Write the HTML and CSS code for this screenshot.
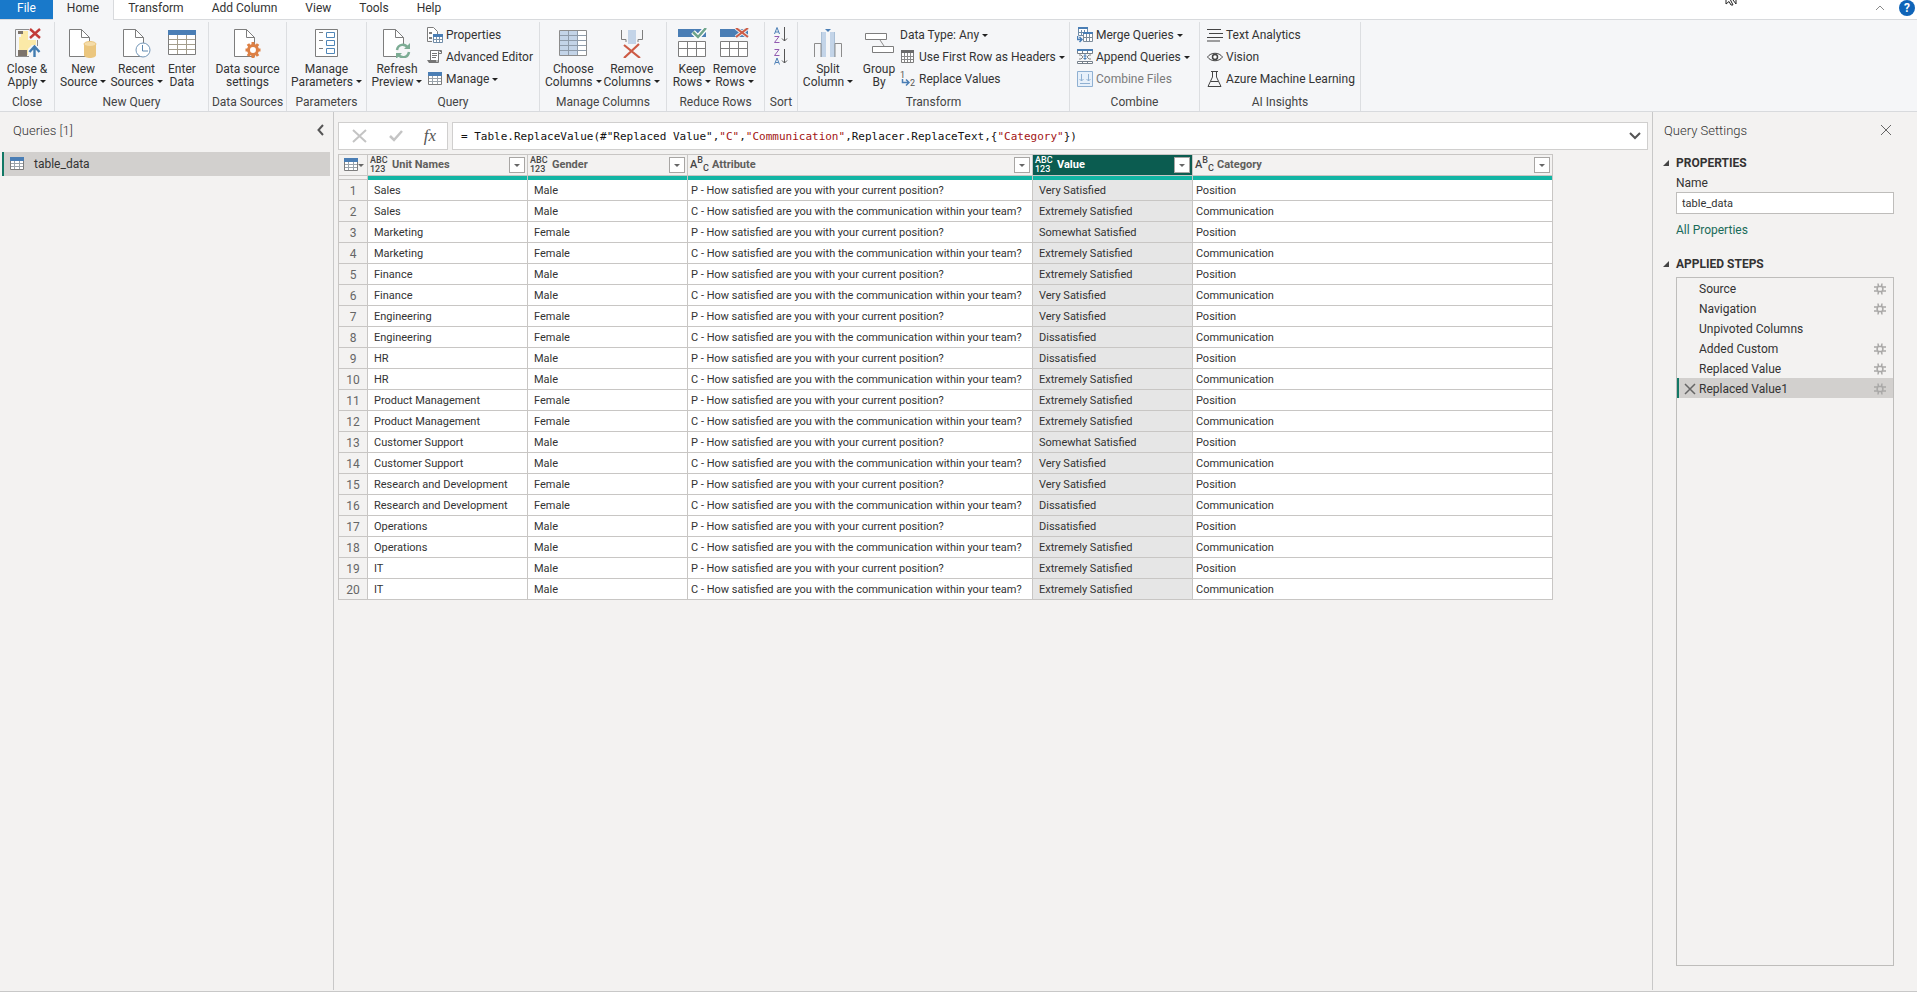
FILE: index.html
```
<!DOCTYPE html>
<html lang="en">
<head>
  <meta charset="UTF-8" />
  <meta name="viewport" content="width=device-width, initial-scale=1.0" />
  <title>Power Query Editor</title>
  <link rel="stylesheet" href="styles.css">
</head>
<body>
  <!-- shared shapes -->
  <svg class="defs" width="0" height="0" aria-hidden="true">
    <symbol id="page" viewBox="0 0 30 30">
      <path d="M1.5 1.5H13.5L21.5 9.5V28.5H1.5Z" fill="#fff" stroke="#7d7d7d"/>
      <path d="M13.5 1.5V9.5H21.5" fill="none" stroke="#7d7d7d"/>
    </symbol>
    <symbol id="table" viewBox="0 0 14 14">
      <path d="M.5 .5H13.5V12.5H.5Z" fill="#fff" stroke="#7d7d7d"/>
      <path d="M0 0H14V4H0Z" fill="#4a7eb5"/>
      <path d="M4.5 4V12M9.5 4V12M1 6.5H13M1 9.5H13" stroke="#9aa3ab"/>
    </symbol>
    <symbol id="gear" viewBox="0 0 12 12">
      <path d="M4 .5L4.500 3.500M8 .5L7.500 3.500M4 11.500L4.500 8.500M8 11.500L7.500 8.500M0 4H3.500M0 8H3.500M8.500 4H12M8.500 8H12" stroke="#a9a8a7" stroke-width="1.500"/>
      <path d="M4 3.500H8L9 6L8 8.500H4L3 6Z" fill="none" stroke="#a9a8a7" stroke-width="1.500"/>
    </symbol>
  </svg>

  <nav class="tabs">
    <button class="tab tab-file">File</button>
    <button class="tab tab-active">Home</button>
    <button class="tab">Transform</button>
    <button class="tab">Add Column</button>
    <button class="tab">View</button>
    <button class="tab">Tools</button>
    <button class="tab">Help</button>
    <div class="tabs-right">
      <button class="plain" aria-label="Collapse ribbon"><svg width="10" height="6"><path d="M1 5L5 1L9 5" fill="none" stroke="#8a8a8a"/></svg></button>
      <button class="help" aria-label="Help">?</button>
    </div>
    <svg class="cursor" width="14" height="6"><path d="M1 0V4L4 1.5L6 5H8L5.500 0M8 0L11 4V0" fill="#fff" stroke="#222"/></svg>
  </nav>

  <div class="ribbon">
    <section class="group g-close">
      <div class="tools">
        <button class="tool">
          <svg width="30" height="30"><path d="M3.500 1.500H17M3.500 1.500V28.500H17M25.500 12V18" fill="none" stroke="#8c8c8c"/><path d="M9 3H16V27H7V9H9ZM16 12H24V17H20L16 21Z" fill="#fbe9a7"/><path d="M6 3H11V6H6ZM6 22H15V28H6Z" fill="#7c736b"/><path d="M18 1L28 10M28 1L18 10" stroke="#c23b38" stroke-width="2.400"/><path d="M22.500 29V19M17.500 24L22.500 18.500L27.500 24" fill="none" stroke="#427cb0" stroke-width="2.400"/></svg>
          <span>Close &amp;<br>Apply <i class="caret"></i></span>
        </button>
      </div>
      <div class="group-name">Close</div>
    </section>
    <section class="group g-new">
      <div class="tools">
        <button class="tool">
          <svg width="30" height="30"><use href="#page" width="30" height="30"/><path d="M16 16V27C16 31 28 31 28 27V16Z" fill="#ebc67e"/><ellipse cx="22" cy="16" rx="6" ry="2.500" fill="#f5dca8" stroke="#ebc67e"/></svg>
          <span>New<br>Source <i class="caret"></i></span>
        </button>
        <button class="tool">
          <svg width="30" height="30"><use href="#page" width="30" height="30"/><circle cx="21" cy="22" r="7" fill="#fff" stroke="#7497b8"/><path d="M20.500 17V23H26" fill="none" stroke="#5f89b0"/></svg>
          <span>Recent<br>Sources <i class="caret"></i></span>
        </button>
        <button class="tool">
          <svg width="30" height="30"><path d="M1.500 2.500H28.500V26.500H1.500Z" fill="#fff" stroke="#7d7d7d"/><path d="M1 2H29V7H1Z" fill="#4a7eb5"/><path d="M10.500 7V26M19.500 7V26M2 11.500H28M2 16.500H28M2 21.500H28" stroke="#a39d8c"/></svg>
          <span>Enter<br>Data</span>
        </button>
      </div>
      <div class="group-name">New Query</div>
    </section>
    <section class="group g-source">
      <div class="tools">
        <button class="tool">
          <svg width="30" height="30"><use href="#page" width="30" height="30"/><circle cx="20" cy="22" r="4.500" fill="#fff" stroke="#dd8045" stroke-width="3"/><path d="M20 14V18M20 26V30M12.500 22H16M24 22H27.500M15 16L17 19M25 16L23 19M15 28L17 25M25 28L23 25" stroke="#dd8045" stroke-width="3"/></svg>
          <span>Data source<br>settings</span>
        </button>
      </div>
      <div class="group-name">Data Sources</div>
    </section>
    <section class="group g-params">
      <div class="tools">
        <button class="tool">
          <svg width="30" height="30"><path d="M3.500 1.500H25.500V28.500H3.500Z" fill="#fff" stroke="#7d7d7d"/><path d="M7 4.500H11M7 12.500H11M7 20.500H11" stroke="#7d7d7d"/><path d="M14.500 4.500H22.500V9.500H14.500ZM14.500 12.500H22.500V17.500H14.500ZM14.500 20.500H22.500V25.500H14.500Z" fill="#fff" stroke="#4f86b8"/></svg>
          <span>Manage<br>Parameters <i class="caret"></i></span>
        </button>
      </div>
      <div class="group-name">Parameters</div>
    </section>
    <section class="group g-query">
      <div class="tools">
        <button class="tool">
          <svg width="30" height="30"><use href="#page" width="30" height="30"/><circle cx="21" cy="23" r="7" fill="#f5f6f8"/><path d="M15 22C16 16 23 15 26 20M27 24C26 30 19 31 16 26" fill="none" stroke="#7cac94" stroke-width="2.500"/><path d="M28 15V21H22ZM14 31V25H20Z" fill="#7cac94"/></svg>
          <span>Refresh<br>Preview <i class="caret"></i></span>
        </button>
        <div class="stack">
          <button class="mini"><svg width="16" height="16"><path d="M.5 14.500V.5H6.500L10.500 4.500V7M.5 14.500H5" fill="#fff" stroke="#7d7d7d"/><path d="M2 5H5V7H2ZM2 10H5V12H2Z" fill="#7d7d7d"/><path d="M6.500 7.500H15.500V15.500H6.500Z" fill="#fff" stroke="#6f8ca8"/><path d="M6 7H16V10H6Z" fill="#4a7eb5"/><path d="M9.500 10V15M12.500 10V15M7 12.500H15" stroke="#7d95ad"/></svg>Properties</button>
          <button class="mini"><svg width="16" height="16"><path d="M3.500 11V1.500H13.500V3M11.500 3V13.500H2" fill="none" stroke="#757575"/><path d="M3.500 1.500H12.500L11.500 3V12H3.500Z" fill="#fff" stroke="#757575"/><path d="M12 1.500H14.500V4.500H12M5 4.500H10M5 6.500H10M5 8.500H9" fill="none" stroke="#757575"/><path d="M0 11H9V14H2Z" fill="#757575"/></svg>Advanced Editor</button>
          <button class="mini"><svg width="16" height="14"><use href="#table" x="1" width="14" height="14"/></svg>Manage <i class="caret"></i></button>
        </div>
      </div>
      <div class="group-name">Query</div>
    </section>
    <section class="group g-columns">
      <div class="tools">
        <button class="tool">
          <svg width="30" height="30"><path d="M1.500 2.500H28.500V27.500H1.500Z" fill="#fff" stroke="#8c8c8c"/><path d="M2 3H20V27H2Z" fill="#c3d4e8"/><path d="M10.500 3V27M19.500 3V27M2 7.500H28M2 12.500H28M2 17.500H28M2 22.500H28" stroke="#8e9baa"/></svg>
          <span>Choose<br>Columns <i class="caret"></i></span>
        </button>
        <button class="tool">
          <svg width="30" height="30"><path d="M4.500 2V11.500H9V14M25.500 2V11.500H21V14" fill="none" stroke="#7d7d7d"/><path d="M11 2H19V16H11Z" fill="#c3d4e8"/><path d="M7 17L23 30M22 16L7 30" stroke="#cd5b45" stroke-width="2.200"/></svg>
          <span>Remove<br>Columns <i class="caret"></i></span>
        </button>
      </div>
      <div class="group-name">Manage Columns</div>
    </section>
    <section class="group g-rows">
      <div class="tools">
        <button class="tool">
          <svg width="30" height="30"><path d="M1 1H29V9H1Z" fill="#4a7eb5"/><path d="M1.500 13.500H28.500V28.500H1.500ZM10.500 13V28M19.500 13V28M1 20.500H29" fill="#fff" stroke="#7d7d7d"/><path d="M16 4L21 9L29 0" fill="none" stroke="#fff" stroke-width="5"/><path d="M16 4L21 9L29 0" fill="none" stroke="#6fa58c" stroke-width="2.500"/></svg>
          <span>Keep<br>Rows <i class="caret"></i></span>
        </button>
        <button class="tool">
          <svg width="30" height="30"><path d="M1 1H29V9H1Z" fill="#4a7eb5"/><path d="M1.500 13.500H28.500V28.500H1.500ZM10.500 13V28M19.500 13V28M1 20.500H29" fill="#fff" stroke="#7d7d7d"/><path d="M17 0L29 9M29 0L17 9" stroke="#e5e9ee" stroke-width="4"/><path d="M17 0L29 9M29 0L17 9" stroke="#cd5b45" stroke-width="2"/></svg>
          <span>Remove<br>Rows <i class="caret"></i></span>
        </button>
      </div>
      <div class="group-name">Reduce Rows</div>
    </section>
    <section class="group g-sort">
      <div class="tools">
        <div class="stack sort-stack">
          <button class="mini sort" aria-label="Sort ascending"><svg width="14" height="16"><path d="M.5 7L3 .5L5.500 7M1.500 5H4.500" fill="none" stroke="#4a7eb5"/><path d="M.5 9.500H5L.5 15.500H5.500" fill="none" stroke="#925bb0"/><path d="M10.500 0V14M8 11.500L10.500 14L13 11.500" fill="none" stroke="#555"/></svg></button>
          <button class="mini sort" aria-label="Sort descending"><svg width="14" height="16"><path d="M.5 .5H5L.5 6.500H5.500" fill="none" stroke="#925bb0"/><path d="M.5 15.500L3 9L5.500 15.500M1.500 13.500H4.500" fill="none" stroke="#4a7eb5"/><path d="M10.500 0V14M8 11.500L10.500 14L13 11.500" fill="none" stroke="#555"/></svg></button>
        </div>
      </div>
      <div class="group-name">Sort</div>
    </section>
    <section class="group g-transform">
      <div class="tools">
        <button class="tool">
          <svg width="30" height="30"><path d="M9 4H13V29H9ZM17 4H21V29H17Z" fill="#c3d4e8"/><path d="M8.500 29V4M21.500 29V4" stroke="#a9bfd6"/><path d="M1.500 29V15.500H8V29M28.500 29V15.500H22V29" fill="none" stroke="#8c8c8c"/><path d="M12 1H18L15 4Z" fill="#4a7eb5"/></svg>
          <span>Split<br>Column <i class="caret"></i></span>
        </button>
        <button class="tool">
          <svg width="30" height="30"><path d="M16 12L20 18" stroke="#8c8c8c"/><path d="M1.500 5.500H22.500V11.500H1.500ZM8.500 18.500H29.500V24.500H8.500Z" fill="#fff" stroke="#7d7d7d"/></svg>
          <span>Group<br>By</span>
        </button>
        <div class="stack">
          <button class="mini">Data Type: Any <i class="caret"></i></button>
          <button class="mini"><svg width="16" height="14"><path d="M1.500 .5H13.500V12.500H1.500Z" fill="#fff" stroke="#7d7d7d"/><path d="M1 0H14V3H1Z" fill="#6b6b6b"/><path d="M4.500 3V12M7.500 3V12M10.500 3V12M2 6.500H13M2 9.500H13" stroke="#8a8a8a"/></svg>Use First Row as Headers <i class="caret"></i></button>
          <button class="mini"><svg width="16" height="16"><text x="0" y="7" class="svg-num">1</text><text x="10" y="15" class="svg-num">2</text><path d="M2.500 8V11.500H8M6 8.500L9 11.500L6 14.500" fill="none" stroke="#4a7eb5" stroke-width="1.500"/></svg>Replace Values</button>
        </div>
      </div>
      <div class="group-name">Transform</div>
    </section>
    <section class="group g-combine">
      <div class="tools">
        <div class="stack">
          <button class="mini"><svg width="16" height="16"><path d="M1.500 .5H10.500V8.500H1.500ZM4.500 3V8M7.500 3V8M1 5.500H10" fill="#fff" stroke="#6f8ca8"/><path d="M1 0H11V2H1Z" fill="#4a7eb5"/><path d="M6.500 6.500H15.500V14.500H6.500ZM9.500 7V14M12.500 7V14M6 10.500H15" fill="#fff" stroke="#7d8c9a"/><path d="M6 5H16V7H6Z" fill="#4a7eb5"/><path d="M.5 9V12.500H4M2.500 10L5 12.500L2.500 15" fill="none" stroke="#4a7eb5" stroke-width="1.500"/></svg>Merge Queries <i class="caret"></i></button>
          <button class="mini"><svg width="16" height="16"><path d="M.5 1.500H15.500V4.500H.5ZM.5 12.500H15.500V14.500H.5ZM5.500 1V4M10.500 1V4M5.500 12V15M10.500 12V15" fill="#fff" stroke="#757f8a"/><path d="M0 0H16V2H0Z" fill="#4a7eb5"/><path d="M2 6H4L6 8L4 10H2M14 6H12L10 8L12 10H14" fill="none" stroke="#858585"/><path d="M8 5V11M6.500 7H9.500M6.500 9.500H9.500" stroke="#4a7eb5"/></svg>Append Queries <i class="caret"></i></button>
          <button class="mini off" disabled><svg width="16" height="16"><path d="M.5 .5H15.500V15.500H.5Z" fill="#e7f0fa" stroke="#8fb0d2"/><path d="M4.500 3V10M2.500 8L4.500 10L6.500 8M11.500 3V10M9.500 8L11.500 10L13.500 8M3 12.500H13" fill="none" stroke="#8fb0d2"/></svg>Combine Files</button>
        </div>
      </div>
      <div class="group-name">Combine</div>
    </section>
    <section class="group g-ai">
      <div class="tools">
        <div class="stack">
          <button class="mini"><svg width="16" height="14"><path d="M0 1.500H14M2 5.500H16M0 9.500H16M0 13H13" stroke="#444"/></svg>Text Analytics</button>
          <button class="mini"><svg width="16" height="12"><path d="M.5 6C4 1 12 1 15.500 6C12 11 4 11 .5 6Z" fill="none" stroke="#444"/><circle cx="8" cy="6" r="2.500" fill="#fff" stroke="#444" stroke-width="1.500"/></svg>Vision</button>
          <button class="mini"><svg width="16" height="16"><path d="M4 .5H11M5.500 .5V6L1 15.500H14L9.500 6V.5M4 10.500H11" fill="none" stroke="#444"/></svg>Azure Machine Learning</button>
        </div>
      </div>
      <div class="group-name">AI Insights</div>
    </section>
  </div>

  <div class="workspace">
    <aside class="queries">
      <div class="panel-head">
        <h2>Queries [1]</h2>
        <button class="plain" aria-label="Collapse queries"><svg width="7" height="12"><path d="M6 1L1.500 6L6 11" fill="none" stroke="#555" stroke-width="2"/></svg></button>
      </div>
      <button class="query"><svg width="14" height="14"><use href="#table" width="14" height="14"/></svg>table_data</button>
    </aside>

    <main class="editor">
      <div class="formula-row">
        <div class="formula-tools">
          <button class="plain" aria-label="Cancel"><svg width="16" height="14"><path d="M1 1L14 13M14 1L1 13" stroke="#c4c4c4" stroke-width="2"/></svg></button>
          <button class="plain" aria-label="Commit"><svg width="14" height="14"><path d="M1 7L5 11L13 2" fill="none" stroke="#c4c4c4" stroke-width="2.500"/></svg></button>
          <button class="plain fx" aria-label="Insert step">fx</button>
        </div>
        <div class="formula-box">
          <div class="formula" role="textbox" contenteditable="true" spellcheck="false" aria-label="Formula">= Table.ReplaceValue(#"Replaced Value",<span class="str">"C"</span>,<span class="str">"Communication"</span>,Replacer.ReplaceText,{<span class="str">"Category"</span>})</div>
          <button class="plain" aria-label="Expand formula bar"><svg width="12" height="8"><path d="M1 1L6 6L11 1" fill="none" stroke="#555" stroke-width="2"/></svg></button>
        </div>
      </div>

      <table class="grid">
        <colgroup>
          <col class="c-num"><col class="c-std"><col class="c-std"><col class="c-attr"><col class="c-std"><col class="c-cat">
        </colgroup>
        <thead>
          <tr>
            <th><button class="corner" aria-label="Table menu"><svg width="14" height="14"><use href="#table" width="14" height="14"/></svg><i class="caret small"></i></button></th>
            <th><div class="head"><span class="any">ABC<br>123</span>Unit Names<button class="filter" aria-label="Filter Unit Names"></button></div></th>
            <th><div class="head"><span class="any">ABC<br>123</span>Gender<button class="filter" aria-label="Filter Gender"></button></div></th>
            <th><div class="head"><span class="abc">A<sup>B</sup><sub>C</sub></span>Attribute<button class="filter" aria-label="Filter Attribute"></button></div></th>
            <th class="picked"><div class="head"><span class="any">ABC<br>123</span>Value<button class="filter" aria-label="Filter Value"></button></div></th>
            <th><div class="head"><span class="abc">A<sup>B</sup><sub>C</sub></span>Category<button class="filter" aria-label="Filter Category"></button></div></th>
          </tr>
          <tr class="quality"><td></td><td></td><td></td><td></td><td></td><td></td></tr>
        </thead>
        <tbody>
          <tr><td>1</td><td>Sales</td><td>Male</td><td>P - How satisfied are you with your current position?</td><td>Very Satisfied</td><td>Position</td></tr>
          <tr><td>2</td><td>Sales</td><td>Male</td><td>C - How satisfied are you with the communication within your team?</td><td>Extremely Satisfied</td><td>Communication</td></tr>
          <tr><td>3</td><td>Marketing</td><td>Female</td><td>P - How satisfied are you with your current position?</td><td>Somewhat Satisfied</td><td>Position</td></tr>
          <tr><td>4</td><td>Marketing</td><td>Female</td><td>C - How satisfied are you with the communication within your team?</td><td>Extremely Satisfied</td><td>Communication</td></tr>
          <tr><td>5</td><td>Finance</td><td>Male</td><td>P - How satisfied are you with your current position?</td><td>Extremely Satisfied</td><td>Position</td></tr>
          <tr><td>6</td><td>Finance</td><td>Male</td><td>C - How satisfied are you with the communication within your team?</td><td>Very Satisfied</td><td>Communication</td></tr>
          <tr><td>7</td><td>Engineering</td><td>Female</td><td>P - How satisfied are you with your current position?</td><td>Very Satisfied</td><td>Position</td></tr>
          <tr><td>8</td><td>Engineering</td><td>Female</td><td>C - How satisfied are you with the communication within your team?</td><td>Dissatisfied</td><td>Communication</td></tr>
          <tr><td>9</td><td>HR</td><td>Male</td><td>P - How satisfied are you with your current position?</td><td>Dissatisfied</td><td>Position</td></tr>
          <tr><td>10</td><td>HR</td><td>Male</td><td>C - How satisfied are you with the communication within your team?</td><td>Extremely Satisfied</td><td>Communication</td></tr>
          <tr><td>11</td><td>Product Management</td><td>Female</td><td>P - How satisfied are you with your current position?</td><td>Extremely Satisfied</td><td>Position</td></tr>
          <tr><td>12</td><td>Product Management</td><td>Female</td><td>C - How satisfied are you with the communication within your team?</td><td>Extremely Satisfied</td><td>Communication</td></tr>
          <tr><td>13</td><td>Customer Support</td><td>Male</td><td>P - How satisfied are you with your current position?</td><td>Somewhat Satisfied</td><td>Position</td></tr>
          <tr><td>14</td><td>Customer Support</td><td>Male</td><td>C - How satisfied are you with the communication within your team?</td><td>Very Satisfied</td><td>Communication</td></tr>
          <tr><td>15</td><td>Research and Development</td><td>Female</td><td>P - How satisfied are you with your current position?</td><td>Very Satisfied</td><td>Position</td></tr>
          <tr><td>16</td><td>Research and Development</td><td>Female</td><td>C - How satisfied are you with the communication within your team?</td><td>Dissatisfied</td><td>Communication</td></tr>
          <tr><td>17</td><td>Operations</td><td>Male</td><td>P - How satisfied are you with your current position?</td><td>Dissatisfied</td><td>Position</td></tr>
          <tr><td>18</td><td>Operations</td><td>Male</td><td>C - How satisfied are you with the communication within your team?</td><td>Extremely Satisfied</td><td>Communication</td></tr>
          <tr><td>19</td><td>IT</td><td>Male</td><td>P - How satisfied are you with your current position?</td><td>Extremely Satisfied</td><td>Position</td></tr>
          <tr><td>20</td><td>IT</td><td>Male</td><td>C - How satisfied are you with the communication within your team?</td><td>Extremely Satisfied</td><td>Communication</td></tr>
        </tbody>
      </table>
    </main>

    <aside class="settings">
      <div class="panel-head">
        <h2>Query Settings</h2>
        <button class="plain" aria-label="Close settings"><svg width="12" height="12"><path d="M1 1L11 11M11 1L1 11" stroke="#666"/></svg></button>
      </div>
      <h3>PROPERTIES</h3>
      <div class="section">
        <label for="name">Name</label>
        <input type="text" id="name" value="table_data" />
        <a href="#">All Properties</a>
      </div>
      <h3>APPLIED STEPS</h3>
      <ul class="steps">
        <li>Source<button class="plain" aria-label="Edit Source"><svg width="12" height="12"><use href="#gear" width="12" height="12"/></svg></button></li>
        <li>Navigation<button class="plain" aria-label="Edit Navigation"><svg width="12" height="12"><use href="#gear" width="12" height="12"/></svg></button></li>
        <li>Unpivoted Columns</li>
        <li>Added Custom<button class="plain" aria-label="Edit Added Custom"><svg width="12" height="12"><use href="#gear" width="12" height="12"/></svg></button></li>
        <li>Replaced Value<button class="plain" aria-label="Edit Replaced Value"><svg width="12" height="12"><use href="#gear" width="12" height="12"/></svg></button></li>
        <li class="current"><button class="plain delete" aria-label="Delete step"><svg width="12" height="12"><path d="M1 1L11 11M11 1L1 11" stroke="#666" stroke-width="1.500"/></svg></button>Replaced Value1<button class="plain" aria-label="Edit Replaced Value1"><svg width="12" height="12"><use href="#gear" width="12" height="12"/></svg></button></li>
      </ul>
    </aside>
  </div>
</body>
</html>
```
FILE: styles.css
```
* {
  box-sizing: border-box;
}
body {
  margin: 0;
  height: 100vh;
  display: flex;
  flex-direction: column;
  font-family: "Segoe UI", Roboto, sans-serif;
  font-size: 12px;
  color: #333;
  background: #f3f2f1;
  overflow: hidden;
}
button {
  font: inherit;
  color: inherit;
  padding: 0;
  border: none;
  background: none;
}
svg {
  display: block;
  flex: none;
}
h2, h3 {
  margin: 0;
}
.defs {
  position: absolute;
}
.plain {
  display: flex;
}
.caret {
  display: inline-block;
  border: 3px solid transparent;
  border-top: 3px solid #222;
  border-bottom: 0;
  vertical-align: 3px;
}
.caret.small {
  border-top-color: #666;
}

/* tabs */
.tabs {
  position: relative;
  display: flex;
  height: 20px;
  background: #fff;
  border-bottom: 1px solid #d8dadd;
}
.tab {
  padding: 0 14px 2px;
  line-height: 17px;
}
.tab-file {
  padding: 0 17px 2px;
  background: #1979ca;
  color: #fff;
}
.tab-active {
  height: 20px;
  padding-bottom: 3px;
  background: #f5f6f8;
  border-right: 1px solid #d8dadd;
}
.tabs-right {
  display: flex;
  align-items: center;
  gap: 14px;
  margin-left: auto;
  padding: 0 2px 4px 0;
}
.help {
  width: 16px;
  height: 16px;
  line-height: 16px;
  border-radius: 50%;
  background: #0f64b8;
  color: #fff;
  font-weight: bold;
}
.cursor {
  position: absolute;
  top: 0;
  right: 178px;
}

/* ribbon */
.ribbon {
  display: flex;
  height: 92px;
  flex: none;
  background: #f5f6f8;
  border-bottom: 1px solid #d8dadd;
}
.group {
  display: flex;
  flex-direction: column;
  flex: none;
  margin: 2px 0 0;
  border-right: 1px solid #dcdee1;
}
.g-close { width: 55px; }
.g-new { width: 154px; }
.g-source { width: 78px; }
.g-params { width: 80px; }
.g-query { width: 173px; }
.g-columns { width: 127px; }
.g-rows { width: 98px; }
.g-sort { width: 33px; }
.g-transform { width: 272px; }
.g-combine { width: 130px; }
.g-ai { width: 161px; }
.tools {
  display: flex;
  flex: 1;
  padding-top: 2px;
}
.g-new .tools {
  padding: 2px 9px 0 3px;
}
.g-new .tool {
  flex: 1 1 auto;
}
.g-columns .tools {
  padding: 2px 5px 0 4px;
}
.g-rows .tools {
  padding: 2px 8px 0 4px;
}
.tool {
  display: flex;
  flex-direction: column;
  align-items: center;
  flex: 1;
  padding-top: 4px;
  gap: 5px;
  line-height: 13px;
  white-space: nowrap;
}
.g-query .tool {
  flex: none;
  width: 60px;
}
.g-transform .tool {
  flex: none;
  width: 60px;
}
.g-transform .tool + .tool {
  width: 42px;
}
.stack {
  display: flex;
  flex-direction: column;
}
.g-combine .stack, .g-ai .stack {
  padding-left: 7px;
}
.mini {
  display: flex;
  align-items: center;
  gap: 3px;
  height: 22px;
  white-space: nowrap;
}
.sort-stack {
  padding-left: 9px;
}
.off {
  color: #7a7a7a;
}
.svg-num {
  font-size: 9px;
  fill: #555;
}
.group-name {
  line-height: 18px;
  text-align: center;
  color: #444;
  white-space: nowrap;
}

/* workspace */
.workspace {
  display: flex;
  flex: 1;
  min-height: 0;
  padding-bottom: 1px;
  border-bottom: 1px solid #c8c8c8;
}
.panel-head {
  display: flex;
  align-items: center;
  justify-content: space-between;
  height: 38px;
  padding-bottom: 2px;
}
.panel-head h2 {
  font-size: 13px;
  font-weight: 300;
}
.queries {
  width: 334px;
  flex: none;
  padding: 0 3px 0 2px;
  border-right: 1px solid #c8c8c8;
}
.queries .panel-head {
  height: 40px;
  padding: 0 6px 4px 11px;
}
.query {
  display: flex;
  align-items: center;
  gap: 10px;
  width: 100%;
  height: 24px;
  padding-left: 6px;
  border-left: 2px solid #117865;
  background: #d2d0ce;
}
.editor {
  flex: 1;
  min-width: 0;
  padding: 10px 4px;
}
.formula-row {
  display: flex;
  gap: 4px;
  margin-bottom: 4px;
}
.formula-tools, .formula-box {
  display: flex;
  align-items: center;
  height: 28px;
  background: #fff;
  border: 1px solid #d0cfce;
}
.formula-tools {
  width: 110px;
  justify-content: space-between;
  padding: 0 11px 0 13px;
}
.fx {
  font: italic 17px "Liberation Serif", serif;
  color: #555;
}
.formula-box {
  flex: 1;
  padding: 0 6px 0 8px;
}
.formula {
  flex: 1;
  font-family: Consolas, "DejaVu Sans Mono", monospace;
  font-size: 11px;
  color: #111;
  outline: none;
}
.str {
  color: #a31515;
}

/* data grid */
.grid {
  width: 1215px;
  table-layout: fixed;
  border-collapse: collapse;
  font-size: 11px;
  line-height: 14px;
}
.c-num { width: 29px; }
.c-std { width: 160px; }
.c-attr { width: 345px; }
.c-cat { width: 360px; }
.grid th, .grid td {
  height: 21px;
  padding: 2px 3px 0;
  border: 1px solid #c8c6c4;
  background: #fff;
  text-align: left;
  white-space: nowrap;
}
.grid td:nth-child(2), .grid td:nth-child(3), .grid td:nth-child(5) {
  padding-left: 6px;
}
.grid td:first-child {
  padding: 2px 0 0;
  background: #f3f2f1;
  color: #666;
  font-size: 12px;
  text-align: center;
}
.grid tbody td:nth-child(5) {
  background: #e6e6e6;
}
.grid th {
  padding: 0 2px;
  background: #f3f2f1;
  color: #605e5c;
}
.grid th.picked {
  background: #0b5c50;
  color: #fff;
}
.grid .quality td {
  height: 4px;
  padding: 0;
  background: #12b5a4;
  border-top-color: #d8e4e2;
  border-bottom: none;
}
.grid .quality td:first-child {
  background: #f3f2f1;
}
.grid tbody tr:first-child td + td {
  border-top-color: #12b5a4;
}
.head {
  display: flex;
  align-items: center;
}
.any {
  width: 22px;
  font-size: 9px;
  line-height: 9px;
  font-weight: 500;
  color: #444;
}
.picked .any {
  color: #fff;
}
.abc {
  width: 22px;
  font-size: 11px;
  line-height: 14px;
  font-weight: 500;
  color: #444;
}
.abc sup, .abc sub {
  font-size: 9px;
  line-height: 0;
}
.filter {
  width: 16px;
  height: 16px;
  margin-left: auto;
  border: 1px solid #a8a6a4;
  background: #fff;
}
.filter::before {
  content: "";
  display: block;
  width: 0;
  margin: auto;
  border: 3px solid transparent;
  border-top: 3px solid #666;
  border-bottom: 0;
}
.corner {
  display: flex;
  align-items: center;
  padding-left: 3px;
}

/* query settings */
.settings {
  display: flex;
  flex-direction: column;
  width: 265px;
  flex: none;
  padding: 0 23px 24px;
  border-left: 1px solid #c8c8c8;
}
.settings .panel-head {
  margin: 0 2px 0 -12px;
}
.settings h3 {
  display: flex;
  align-items: center;
  gap: 7px;
  margin-left: -13px;
  font-size: 12px;
  line-height: 26px;
}
.settings h3::before {
  content: "";
  border-left: 6px solid transparent;
  border-bottom: 6px solid #444;
}
.section {
  display: flex;
  flex-direction: column;
  align-items: flex-start;
}
.section label {
  line-height: 14px;
  margin-bottom: 2px;
}
.section input {
  width: 100%;
  height: 22px;
  padding: 0 5px;
  border: 1px solid #bebdbb;
  font: inherit;
  font-size: 11px;
  color: #333;
}
.section a {
  margin: 7px 0 12px;
  line-height: 18px;
  color: #1a6b59;
  text-decoration: none;
}
.steps {
  flex: 1;
  margin: 0;
  padding: 0;
  border: 1px solid #bebdbb;
  list-style: none;
}
.steps li {
  display: flex;
  align-items: center;
  justify-content: space-between;
  height: 20px;
  padding: 2px 7px 0 22px;
}
.steps .current {
  padding-left: 5px;
  background: #d2d0ce;
  border-left: 2px solid #117865;
}
.steps .delete {
  margin-right: 3px;
}
.steps .current .plain:last-child {
  margin-left: auto;
}
```
